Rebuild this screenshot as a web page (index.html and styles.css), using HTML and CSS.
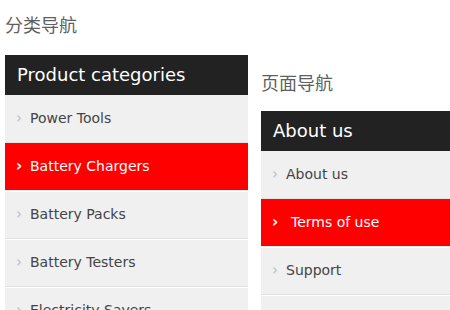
FILE: index.html
```
<!DOCTYPE html>
<html lang="zh">
<head>
    <meta charset="UTF-8">
    <title>导航</title>
    <link rel="stylesheet" href="styles.css">
</head>
<body>
<div class="page">
    <div class="column">
        <h2 class="nav-title">分类导航</h2>
        <div class="nav-box">
            <div class="nav-head">Product categories</div>
            <ul class="nav-list">
                <li><a href="#">Power Tools</a></li>
                <li class="active"><a href="#">Battery Chargers</a></li>
                <li><a href="#">Battery Packs</a></li>
                <li><a href="#">Battery Testers</a></li>
                <li><a href="#">Electricity Savers</a></li>
            </ul>
        </div>
    </div>
    <div class="column column-low">
        <h2 class="nav-title">页面导航</h2>
        <div class="nav-box">
            <div class="nav-head">About us</div>
            <ul class="nav-list nav-list-end">
                <li><a href="#">About us</a></li>
                <li class="active shift"><a href="#">Terms of use</a></li>
                <li><a href="#">Support</a></li>
            </ul>
        </div>
    </div>
</div>
</body>
</html>
```
FILE: styles.css
```
body { margin: 0; padding: 0; font-family: "DejaVu Sans", "Noto Sans CJK SC", sans-serif; background: #fff; }
.page { display: flex; gap: 13px; padding: 0 5px; align-items: flex-start; }
.column { width: 243px; flex-shrink: 0; }
.column-low { padding-top: 58px; }

.nav-title { margin: 0 0 19px; padding-top: 12px; font-size: 18px; line-height: 24px; font-weight: normal; color: #5f5f5f; font-family: "Noto Sans CJK SC", sans-serif; }
.column-low .nav-title { margin-bottom: 17px; }

.nav-head { background-color: #222; color: #fff; height: 40px; line-height: 40px; padding-left: 12px; font-size: 18px; }

.nav-list { list-style: none; margin: 0; padding: 0; background-color: #f0f0f0; }
.nav-list-end { padding-bottom: 30px; }
.nav-list li { border-bottom: 1px solid #e2e2e2; box-shadow: 0 1px 0 #fff; }
.nav-list a {
    display: block;
    height: 47px;
    line-height: 47px;
    padding-left: 25px;
    position: relative;
    color: #444;
    font-size: 14px;
    text-decoration: none;
}
.nav-list a::before {
    content: "›";
    position: absolute;
    left: 11px;
    color: #bbb;
    font-size: 15px;
}
.nav-list .active { border-bottom-color: #f0f0f0; }
.nav-list .active a { background-color: #f00; color: #fff; }
.nav-list .active a::before { color: #fff; font-weight: bold; }
.nav-list .shift a { padding-left: 30px; }
```
